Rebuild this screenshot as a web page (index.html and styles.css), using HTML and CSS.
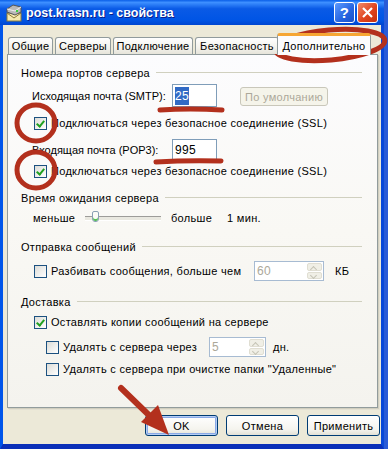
FILE: index.html
```html
<!DOCTYPE html>
<html lang="ru">
<head>
    <meta charset="UTF-8">
    <title>post.krasn.ru - свойства</title>
    <link rel="stylesheet" href="styles.css">
</head>
<body>
    <div class="window">
        <div class="titlebar">
            <svg class="app-icon" width="18" height="18" viewBox="0 0 18 18">
                <rect x="2" y="9" width="14" height="8" fill="#f4e9b0" stroke="#8a7a3a"/>
                <path d="M2 9 L9 14 L16 9" fill="none" stroke="#8a7a3a"/>
                <path d="M2 5 L8 1 L16 3 L16 8 L10 11 L2 8 Z" fill="#b9b9b9" stroke="#555"/>
                <path d="M2 5 L10 7 L16 3" fill="none" stroke="#eee"/>
                <rect x="11" y="6" width="2" height="2" fill="#3ccf3c"/>
            </svg>
            <span class="title">post.krasn.ru - свойства</span>
            <div class="title-buttons">
                <span class="tb-btn help">?</span>
                <span class="tb-btn close">
                    <svg width="13" height="13" viewBox="0 0 13 13"><path d="M2 2 L11 11 M11 2 L2 11" stroke="#fff" stroke-width="2.2"/></svg>
                </span>
            </div>
        </div>

        <div class="tabs">
            <div class="tab w-general">Общие</div>
            <div class="tab w-servers">Серверы</div>
            <div class="tab w-connect">Подключение</div>
            <div class="tab w-security">Безопасность</div>
            <div class="tab active">Дополнительно</div>
        </div>

        <div class="panel">
            <div class="group g1">
                <span>Номера портов сервера</span><span class="rule"></span>
            </div>
            <div class="row r-smtp">
                <span class="port-label">Исходящая почта (SMTP):</span>
                <span class="field port"><span class="selected">25</span></span>
                <span class="xp-btn disabled">По умолчанию</span>
            </div>
            <div class="row check r-ssl1">
                <span class="box checked"></span>
                <span>Подключаться через безопасное соединение (SSL)</span>
            </div>
            <div class="row r-pop3">
                <span class="port-label">Входящая почта (POP3):</span>
                <span class="field port">995</span>
            </div>
            <div class="row check r-ssl2">
                <span class="box checked"></span>
                <span>Подключаться через безопасное соединение (SSL)</span>
            </div>

            <div class="group g2">
                <span>Время ожидания сервера</span><span class="rule"></span>
            </div>
            <div class="row r-slider">
                <span class="less">меньше</span>
                <span class="slider"><span class="thumb"></span></span>
                <span class="more">больше</span>
                <span class="minutes">1 мин.</span>
            </div>

            <div class="group g3">
                <span>Отправка сообщений</span><span class="rule"></span>
            </div>
            <div class="row check r-split">
                <span class="box"></span>
                <span class="split-text">Разбивать сообщения, больше чем</span>
                <span class="spin w-kb"><span class="spin-val">60</span><span class="arrows"><i class="up"></i><i class="down"></i></span></span>
                <span class="unit">КБ</span>
            </div>

            <div class="group g4">
                <span>Доставка</span><span class="rule"></span>
            </div>
            <div class="row check r-keep">
                <span class="box checked"></span>
                <span>Оставлять копии сообщений на сервере</span>
            </div>
            <div class="row check nested r-del">
                <span class="box"></span>
                <span class="del-text">Удалять с сервера через</span>
                <span class="spin w-days"><span class="spin-val">5</span><span class="arrows"><i class="up"></i><i class="down"></i></span></span>
                <span class="unit days">дн.</span>
            </div>
            <div class="row check nested r-empty">
                <span class="box"></span>
                <span>Удалять с сервера при очистке папки "Удаленные"</span>
            </div>
        </div>

        <div class="actions">
            <span class="xp-btn default">OK</span>
            <span class="xp-btn">Отмена</span>
            <span class="xp-btn">Применить</span>
        </div>
    </div>

    <svg class="marks" width="388" height="449" viewBox="0 0 388 449">
        <ellipse cx="330" cy="45" rx="55" ry="15" transform="rotate(-5 330 45)" />
        <ellipse cx="36" cy="123" rx="19" ry="18" />
        <ellipse cx="36" cy="170" rx="19" ry="18" />
        <path d="M160 110 Q190 108 222 110" />
        <path d="M156 162 Q188 160 221 161" />
        <path d="M121 388 L155 421" class="shaft" />
        <polygon points="169,435 141,422 158,405" class="head" />
    </svg>
</body>
</html>
```

FILE: styles.css
```css
body {
    margin: 0;
    width: 388px;
    height: 449px;
    overflow: hidden;
    background-color: #2a5bd7;
    font-family: "Liberation Sans", Arial, sans-serif;
    font-size: 11px;
    letter-spacing: 0.3px;
    color: #000;
    position: relative;
}
.window {
    width: 378px;
    height: 444px;
    background-color: #ece9d8;
    border-left: 3px solid #0055ea;
    border-right: 3px solid #0848d8;
    border-bottom: 5px solid #0a2fb8;
    display: flex;
    flex-direction: column;
}
.titlebar {
    height: 25px;
    margin-left: -3px;
    margin-right: -3px;
    display: flex;
    align-items: center;
    background: linear-gradient(#0a5fe8, #3d8fff 10%, #0a5ae6 35%, #0055e5 80%, #0046d0);
    color: white;
}
.app-icon {
    margin-left: 5px;
    margin-right: 3px;
}
.title {
    font-weight: bold;
    font-size: 12.5px;
    letter-spacing: 0;
    text-shadow: 1px 1px 0 #0a1e8c;
    flex: 1;
}
.title-buttons {
    display: flex;
    gap: 2px;
    margin-right: 6px;
}
.tb-btn {
    width: 19px;
    height: 19px;
    border: 1px solid #fff;
    border-radius: 3px;
    display: flex;
    align-items: center;
    justify-content: center;
    font-weight: bold;
    font-size: 15px;
    color: white;
}
.help {
    background: linear-gradient(135deg, #5c9aff, #2563e0 60%, #1a4fc8);
}
.close {
    background: linear-gradient(135deg, #f08a6a, #e0441e 55%, #c4300e);
}
.tabs {
    display: flex;
    align-items: flex-end;
    margin-top: 8px;
    padding-left: 5px;
    height: 21px;
    position: relative;
    z-index: 1;
}
.tab {
    height: 16px;
    line-height: 16px;
    text-align: center;
    border: 1px solid #919b9c;
    border-bottom: none;
    border-radius: 3px 3px 0 0;
    background: linear-gradient(#fff, #f3f2ec 60%, #e6e4da);
    margin-right: 2px;
    white-space: nowrap;
    overflow: hidden;
}
.w-general { width: 43px; }
.w-servers { width: 54px; }
.w-connect { width: 78px; }
.w-security { width: 82px; margin-right: 0; }
.tab.active {
    width: 92px;
    line-height: 20px;
    margin-left: -2px;
    background: #fcfcfe;
    border-top: 3px solid #f6a634;
    height: 19px;
    margin-bottom: -1px;
}
.panel {
    margin-left: 4px;
    width: 341px;
    height: 352px;
    border: 1px solid #919b9c;
    box-shadow: 1px 1px 0 #d0cebf, 2px 2px 0 #e3e0d2;
    background: linear-gradient(#fcfcfe, #f9f8f4 50%, #f4f3ee);
    padding-left: 13px;
    padding-right: 15px;
    display: flex;
    flex-direction: column;
}
.group {
    display: flex;
    align-items: center;
    height: 16px;
}
.rule {
    flex: 1;
    height: 1px;
    background-color: #d0d0bf;
    margin-left: 6px;
    margin-top: -1px;
}
.row {
    display: flex;
    align-items: center;
    height: 20px;
    margin-left: 11px;
    white-space: nowrap;
}
.row > * {
    flex-shrink: 0;
}
.row.check {
    margin-left: 13px;
}
.row.nested {
    margin-left: 25px;
}
.g1 { margin-top: 10px; }
.r-smtp { margin-top: 3px; height: 23px; }
.r-ssl1 { margin-top: 6px; }
.r-pop3 { margin-top: 6px; height: 21px; }
.r-ssl2 { margin-top: 1px; }
.g2 { margin-top: 9px; }
.r-slider { margin-top: 2px; margin-left: 12px; }
.g3 { margin-top: 11px; }
.r-split { margin-top: 6px; }
.g4 { margin-top: 13px; }
.r-keep { margin-top: 2px; }
.r-del { margin-top: 5px; }
.r-empty { margin-top: 2px; }
.port-label {
    width: 140px;
    letter-spacing: 0;
}
.field {
    box-sizing: border-box;
    height: 100%;
    border: 1px solid #7f9db9;
    background: #fff;
    display: flex;
    align-items: center;
    padding-left: 2px;
}
.port {
    width: 45px;
    font-size: 12px;
}
.selected {
    background-color: #316ac5;
    color: #fff;
    padding: 2px 0;
}
.xp-btn {
    box-sizing: border-box;
    height: 21px;
    border: 1px solid #003c74;
    border-radius: 3px;
    background: linear-gradient(#fff, #f5f4ee 70%, #e3e1d6);
    display: flex;
    align-items: center;
    justify-content: center;
}
.xp-btn.disabled {
    width: 88px;
    height: 19px;
    margin-left: 23px;
    margin-top: 2px;
    border-color: #c9c7ba;
    background: #f5f4ea;
    color: #aca899;
}
.box {
    box-sizing: border-box;
    width: 13px;
    height: 13px;
    border: 1px solid #1c5180;
    background: linear-gradient(135deg, #dcdcd7, #fff);
    margin-right: 4px;
    position: relative;
}
.box.checked::after {
    content: "";
    position: absolute;
    left: 3px;
    top: 1px;
    width: 3px;
    height: 6px;
    border-right: 2px solid #21a121;
    border-bottom: 2px solid #21a121;
    transform: rotate(40deg);
}
.less {
    width: 52px;
}
.slider {
    width: 76px;
    height: 3px;
    border-top: 1px solid #9d9c99;
    border-bottom: 1px solid #fff;
    background: #e9e8e0;
    position: relative;
}
.thumb {
    position: absolute;
    left: 7px;
    top: -6px;
    width: 5px;
    height: 9px;
    border: 1px solid #8aa0b4;
    border-radius: 2px 2px 3px 3px;
    background: #fbfbf7;
    box-shadow: inset 0 -2px 0 #55c055;
}
.more {
    margin-left: 10px;
}
.minutes {
    margin-left: 15px;
}
.split-text {
    width: 203px;
}
.spin {
    box-sizing: border-box;
    height: 20px;
    border: 1px solid #a7bbd2;
    background: #fff;
    display: flex;
    color: #aca899;
    font-size: 12px;
}
.w-kb { width: 70px; }
.w-days { width: 57px; }
.spin-val {
    flex: 1;
    padding-left: 2px;
    line-height: 18px;
}
.arrows {
    width: 15px;
    display: flex;
    flex-direction: column;
    gap: 1px;
    padding: 1px;
}
.arrows i {
    flex: 1;
    border-radius: 2px;
    background: #f0efe6;
    border: 1px solid #e0ded2;
    position: relative;
}
.arrows i::after {
    content: "";
    position: absolute;
    left: 3px;
    width: 4px;
    height: 4px;
    border-left: 1px solid #c5c3b6;
    border-top: 1px solid #c5c3b6;
}
.arrows .up::after {
    top: 3px;
    transform: rotate(45deg);
}
.arrows .down::after {
    top: 0;
    transform: rotate(225deg);
}
.unit {
    margin-left: 11px;
}
.unit.days {
    margin-left: 7px;
}
.del-text {
    width: 146px;
}
.actions {
    display: flex;
    justify-content: flex-end;
    gap: 8px;
    margin-top: 7px;
    padding-right: 1px;
}
.actions .xp-btn {
    width: 73px;
}
.xp-btn.default {
    box-shadow: inset 0 0 0 1px #b4cdf5, inset 0 0 0 2px #8aa9e6;
}
.marks {
    position: absolute;
    left: 0;
    top: 0;
    pointer-events: none;
}
.marks ellipse,
.marks path {
    fill: none;
    stroke: #b3301d;
    stroke-width: 5;
    stroke-linecap: round;
}
.marks path.shaft {
    stroke-width: 6;
}
.marks .head {
    fill: #b3301d;
}
```
